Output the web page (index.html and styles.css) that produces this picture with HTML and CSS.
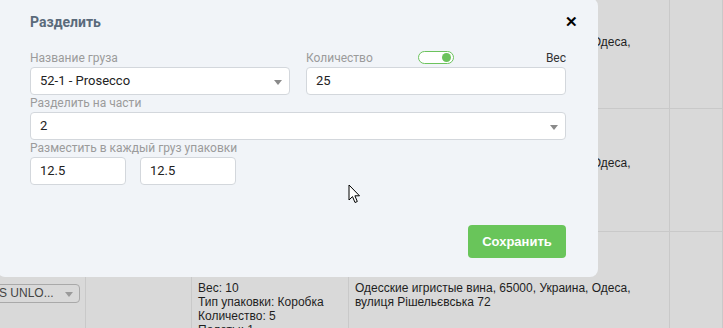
FILE: index.html
```html
<!DOCTYPE html>
<html lang="ru">
<head>
    <meta charset="UTF-8">
    <title>Разделить</title>
    <link rel="stylesheet" href="styles.css">
</head>
<body>

    <!-- table behind the dialog -->
    <div class="table">
        <div class="cell"></div>
        <div class="cell"></div>
        <div class="cell"></div>
        <div class="cell address">Одесские игристые вина, 65000, Украина, Одеса,<br>вулиця Рішельєвська 72</div>
        <div class="cell"></div>

        <div class="cell"></div>
        <div class="cell"></div>
        <div class="cell"></div>
        <div class="cell address">Одесские игристые вина, 65000, Украина, Одеса,<br>вулиця Рішельєвська 72</div>
        <div class="cell"></div>

        <div class="cell top"><div class="mini-select">ES UNLO...<span class="caret"></span></div></div>
        <div class="cell top"></div>
        <div class="cell top">Вес: 10<br>Тип упаковки: Коробка<br>Количество: 5<br>Палеты: 1</div>
        <div class="cell top">Одесские игристые вина, 65000, Украина, Одеса,<br>вулиця Рішельєвська 72</div>
        <div class="cell top"></div>
    </div>

    <div class="modal">
        <div class="modal-header">
            <h3>Разделить</h3>
            <button class="close">&#10005;</button>
        </div>

        <div class="row two">
            <div class="field">
                <label>Название груза</label>
                <div class="select">52-1 - Prosecco<span class="caret"></span></div>
            </div>
            <div class="field">
                <div class="label-row">
                    <label>Количество</label>
                    <span class="toggle"><span class="knob"></span></span>
                    <span class="alt">Вес</span>
                </div>
                <div class="input">25</div>
            </div>
        </div>

        <div class="field">
            <label>Разделить на части</label>
            <div class="select">2<span class="caret"></span></div>
        </div>

        <div class="field">
            <label>Разместить в каждый груз упаковки</label>
            <div class="parts">
                <div class="input small">12.5</div>
                <div class="input small">12.5</div>
            </div>
        </div>

        <div class="actions">
            <button class="save">Сохранить</button>
        </div>
    </div>

    <svg class="cursor" width="13" height="20" viewBox="0 0 13 20">
        <path d="M1 1 L1 16 L4.5 12.6 L7 18.5 L9.3 17.5 L6.9 11.8 L11.5 11.8 Z" fill="#fff" stroke="#000" stroke-width="1" stroke-linejoin="round"/>
    </svg>

</body>
</html>
```

FILE: styles.css
```css
body {
    margin: 0;
    width: 723px;
    height: 328px;
    overflow: hidden;
    position: relative;
    background: #d9d9d9;
    font-family: "Liberation Sans", Arial, sans-serif;
}

.table {
    display: grid;
    grid-template-columns: 86px 106px 157px 321px 1fr;
    grid-template-rows: 119px 123px 96px;
    margin-top: -10px;
    font-size: 12px;
    line-height: 14px;
    color: #1e1e1e;
}

.cell {
    border-right: 1px solid #c9c9c9;
    border-bottom: 1px solid #c9c9c9;
    padding: 0 6px;
    display: flex;
    align-items: center;
    overflow: hidden;
}

.cell.top {
    align-items: flex-start;
    padding-top: 49px;
    border-bottom: none;
}

.mini-select {
    position: relative;
    margin-left: -28px;
    margin-top: 3px;
    width: 102px;
    height: 19px;
    line-height: 17px;
    padding-left: 12px;
    border: 1px solid #a9a9a9;
    border-radius: 4px;
    color: #444;
    font-size: 12px;
    box-sizing: border-box;
    flex-shrink: 0;
}

.mini-select .caret {
    right: 6px;
    top: 7px;
    border-top-color: #9a9a9a;
}

.modal {
    position: absolute;
    left: -3px;
    top: -2px;
    width: 601px;
    height: 279px;
    box-sizing: border-box;
    padding: 14px 32px 0 33px;
    background: #f1f4f8;
    border-radius: 8px;
    font-family: Roboto, "Liberation Sans", sans-serif;
}

.modal-header {
    display: flex;
    justify-content: space-between;
    align-items: center;
    height: 20px;
    margin-bottom: 18px;
}

.modal-header h3 {
    margin: 0;
    font-size: 14px;
    font-weight: 700;
    color: #5a6a7b;
}

.close {
    border: none;
    background: none;
    padding: 0;
    margin-right: -12px;
    font-size: 15px;
    font-weight: 700;
    color: #000;
    line-height: 20px;
}

.row.two {
    display: grid;
    grid-template-columns: 1fr 1fr;
    gap: 16px;
}

.field label {
    display: block;
    font-size: 12px;
    line-height: 16px;
    color: #9b9b9b;
}

.label-row {
    display: grid;
    grid-template-columns: 1fr auto 1fr;
    align-items: center;
    height: 16px;
}

.label-row .alt {
    justify-self: end;
    font-size: 12px;
    color: #333;
}

.toggle {
    width: 36px;
    height: 13px;
    box-sizing: border-box;
    border: 1px solid #6cc35d;
    border-radius: 7px;
    background: #fff;
    display: flex;
    align-items: center;
    justify-content: flex-end;
    padding-right: 2px;
    margin-top: -2px;
}

.knob {
    width: 9px;
    height: 9px;
    border-radius: 50%;
    background: #6cc35d;
}

.select, .input {
    position: relative;
    height: 28px;
    line-height: 26px;
    margin-top: 1px;
    padding: 0 9px;
    box-sizing: border-box;
    background: #fff;
    border: 1px solid #d3d7dc;
    border-radius: 4px;
    font-size: 13px;
    color: #222;
}

.caret {
    position: absolute;
    right: 7px;
    top: 12px;
    width: 0;
    height: 0;
    border-left: 4px solid transparent;
    border-right: 4px solid transparent;
    border-top: 5px solid #8a8a8a;
}

.parts {
    display: flex;
    gap: 14px;
}

.input.small {
    width: 96px;
}

.actions {
    display: flex;
    justify-content: flex-end;
    margin-top: 40px;
}

.save {
    width: 98px;
    height: 33px;
    border: none;
    border-radius: 4px;
    background: #69c55a;
    color: #fff;
    font-family: "Liberation Sans", Arial, sans-serif;
    font-size: 13px;
    font-weight: 700;
}

.cursor {
    position: absolute;
    left: 348px;
    top: 184px;
}
```
